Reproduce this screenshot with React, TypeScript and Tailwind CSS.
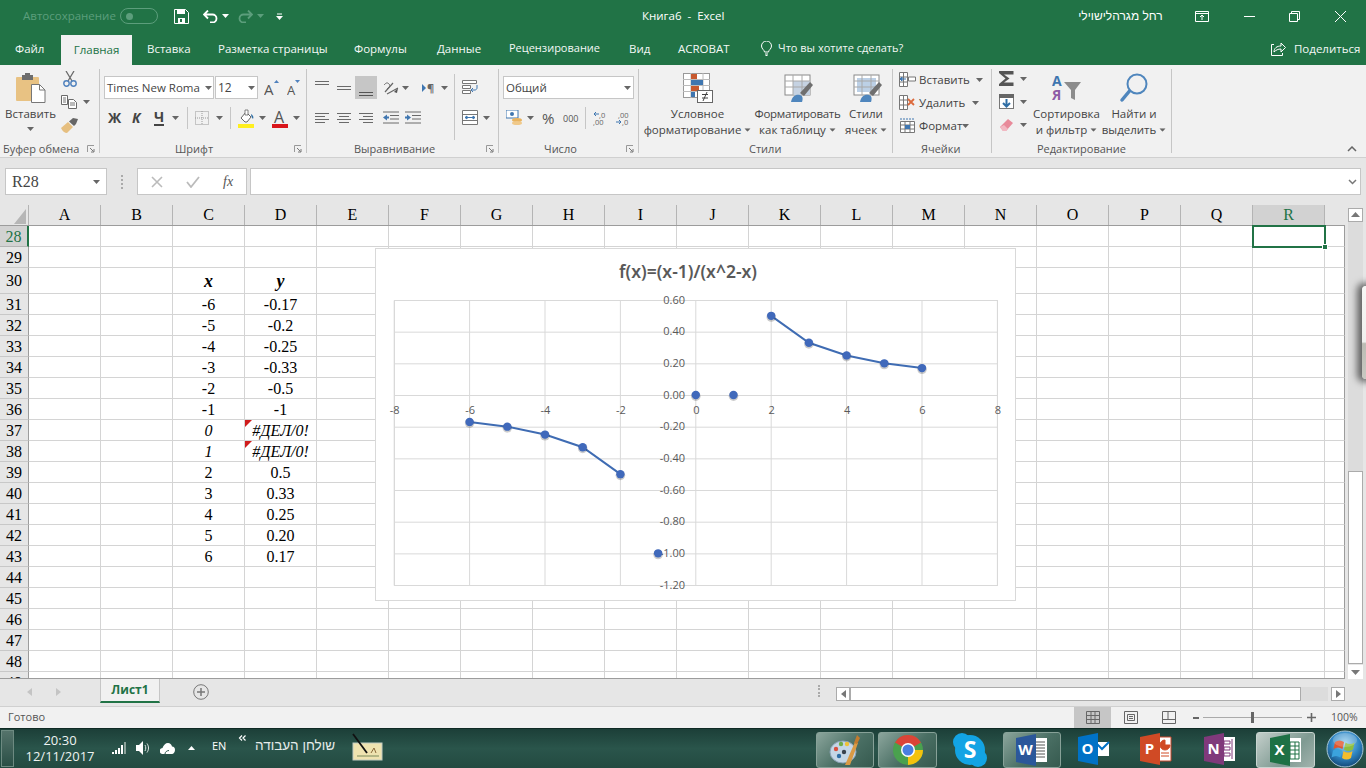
import React from "react";

const COLS = ["A", "B", "C", "D", "E", "F", "G", "H", "I", "J", "K", "L", "M", "N", "O", "P", "Q", "R"];

const ROWS = [
  { n: 28, h: "h-[21px]" },
  { n: 29, h: "h-[21px]" },
  { n: 30, h: "h-[26px]", x: "x", y: "y", style: "font-bold italic text-[18px]" },
  { n: 31, h: "h-[21px]", x: "-6", y: "-0.17" },
  { n: 32, h: "h-[21px]", x: "-5", y: "-0.2" },
  { n: 33, h: "h-[21px]", x: "-4", y: "-0.25" },
  { n: 34, h: "h-[21px]", x: "-3", y: "-0.33" },
  { n: 35, h: "h-[21px]", x: "-2", y: "-0.5" },
  { n: 36, h: "h-[21px]", x: "-1", y: "-1" },
  { n: 37, h: "h-[21px]", x: "0", y: "#ДЕЛ/0!", style: "italic", err: true },
  { n: 38, h: "h-[21px]", x: "1", y: "#ДЕЛ/0!", style: "italic", err: true },
  { n: 39, h: "h-[21px]", x: "2", y: "0.5" },
  { n: 40, h: "h-[21px]", x: "3", y: "0.33" },
  { n: 41, h: "h-[21px]", x: "4", y: "0.25" },
  { n: 42, h: "h-[21px]", x: "5", y: "0.20" },
  { n: 43, h: "h-[21px]", x: "6", y: "0.17" },
  { n: 44, h: "h-[21px]" },
  { n: 45, h: "h-[21px]" },
  { n: 46, h: "h-[21px]" },
  { n: 47, h: "h-[21px]" },
  { n: 48, h: "h-[21px]" },
  { n: 49, h: "h-[21px]" },
] as { n: number; h: string; x?: string; y?: string; style?: string; err?: boolean }[];

const Caret = ({ className = "", color = "#666" }: { className?: string; color?: string }) => (
  <svg className={"shrink-0 " + className} width="7" height="4" viewBox="0 0 7 4">
    <path d="M0 0h7L3.5 4z" fill={color} />
  </svg>
);

// stacked lines used by the alignment buttons
const Lines = ({ rows, className = "", color = "#6a6a6a" }: { rows: number[][]; className?: string; color?: string }) => (
  <svg className={"shrink-0 " + className} width="15" height="14" viewBox="0 0 15 14">
    {rows.map(([x, w, y], i) => (
      <rect key={i} x={x} y={y} width={w} height="1" fill={color} />
    ))}
  </svg>
);

const GROUP_LABEL = "text-[11px] text-[#555] whitespace-nowrap";

const Launcher = () => (
  <svg width="8" height="8" viewBox="0 0 8 8" className="shrink-0">
    <path d="M0.5 7V0.5H7" fill="none" stroke="#999" />
    <path d="M3 3l3.5 3.5M7 4v3H4" fill="none" stroke="#777" />
  </svg>
);

function Group({ w, label, labelClass, launcher, children }: {
  w: string; label: string; labelClass: string; launcher?: boolean; children: React.ReactNode;
}) {
  return (
    <div className={"flex shrink-0 " + w}>
      <div className="flex-1 flex flex-col min-w-0">
        <div className="h-[76px] flex">{children}</div>
        <div className="h-[16px] flex items-center">
          <span className={GROUP_LABEL + " " + labelClass}>{label}</span>
          {launcher && <span className="flex ml-auto mr-[4px]"><Launcher /></span>}
        </div>
      </div>
      <div className="w-px h-[84px] mt-[4px] bg-[#c6c6c6] shrink-0" />
    </div>
  );
}

const BigLabel = ({ a, b, tight }: { a: string; b: string; tight?: boolean }) => (
  <div className="flex flex-col items-center text-[11.5px] leading-[16px] text-[#444] whitespace-nowrap">
    <span className={tight ? "tracking-[-0.3px]" : ""}>{a}</span>
    <span className="flex items-center">
      {b}
      <Caret className="ml-[3px] scale-90" />
    </span>
  </div>
);

const TableBrush = ({ fill }: { fill: React.ReactNode }) => (
  <svg width="30" height="30" viewBox="0 0 30 30">
    <rect x="1" y="2" width="25" height="20" fill="#fff" stroke="#8a8a8a" />
    {fill}
    <path d="M1 8h25M1 14h25M9 2v20M18 2v20" stroke="#a8a8a8" fill="none" />
    <path d="M16 20L26 9l3 3-9 11z" fill="#6f6f6f" />
    <path d="M7 29c1-6 5-8 9-7 3 1 3 4 2 7z" fill="#4f86bd" />
  </svg>
);

function Ribbon() {
  return (
    <div className="h-[92px] bg-[#f1f1f1] flex shrink-0">
      <Group w="w-[100px]" label="Буфер обмена" labelClass="ml-[3px]" launcher>
        <div className="w-[61px] flex flex-col items-center pt-[8px]">
          <svg width="30" height="30" viewBox="0 0 30 30">
            <rect x="0" y="4" width="23" height="24" rx="1" fill="#e8c283" />
            <rect x="6" y="2" width="11" height="5" fill="#6d6d6d" />
            <rect x="9" y="0" width="5" height="3" fill="#6d6d6d" />
            <path d="M15.5 11.5h8l5.5 5.5v12.5h-13.5z" fill="#fff" stroke="#777" />
            <path d="M23.5 11.5v5.500h5.500" fill="none" stroke="#777" />
          </svg>
          <span className="text-[11.5px] leading-[16px] text-[#444] mt-[3px]">Вставить</span>
          <Caret className="mt-[5px]" />
        </div>
        <div className="flex flex-col pt-[6px]">
          <svg width="16" height="16" viewBox="0 0 16 16" className="ml-[1px]">
            <path d="M4 0l6 10M12 0L6 10" stroke="#6b6b6b" strokeWidth="1.300" fill="none" />
            <circle cx="4.500" cy="12.500" r="2.700" fill="none" stroke="#4f81bd" strokeWidth="1.400" />
            <circle cx="11.500" cy="12.500" r="2.700" fill="none" stroke="#4f81bd" strokeWidth="1.400" />
          </svg>
          <div className="flex items-center mt-[8px]">
            <svg width="16" height="14" viewBox="0 0 16 14">
              <path d="M.5.500h6v9h-6zM7.500 4.500h5l3 3v6h-8z" fill="#fff" stroke="#6a6a6a" />
              <path d="M2 3h3M2 5h3M2 7h3M9 8h5M9 10h5" stroke="#777" />
            </svg>
            <Caret className="ml-[6px]" />
          </div>
          <svg width="18" height="15" viewBox="0 0 18 15" className="mt-[9px]">
            <path d="M0 10L7 4l5 5-6 6c-2 0-5-2-6-5z" fill="#e6bf80" />
            <path d="M8 3.500L12 0l5 1-2 5-2 2z" fill="#666" />
          </svg>
        </div>
      </Group>

      <Group w="w-[207px]" label="Шрифт" labelClass="ml-[75px]" launcher>
        <div className="pt-[11px] flex flex-col">
          <div className="flex items-center">
            <div className="ml-[4px] w-[110px] h-[23px] bg-white border border-[#c6c6c6] flex items-center pl-[2px] text-[11.5px] text-[#444] whitespace-nowrap">
              <span className="w-[98px]">Times New Roma</span>
              <Caret />
            </div>
            <div className="ml-[1px] w-[43px] h-[23px] bg-white border border-[#c6c6c6] flex items-center pl-[2px] text-[12px] text-[#444]">
              <span className="w-[30px]">12</span>
              <Caret />
            </div>
            <svg width="16" height="16" viewBox="0 0 16 16" className="ml-[6px] shrink-0">
              <text x="0" y="15" fontSize="15" fill="#555" fontFamily="Open Sans">A</text>
              <path d="M10 3l2.500-3L15 3z" fill="#4f81bd" />
            </svg>
            <svg width="14" height="16" viewBox="0 0 14 16" className="ml-[7px] shrink-0">
              <text x="0" y="15" fontSize="13" fill="#555" fontFamily="Open Sans">A</text>
              <path d="M8 0h5l-2.500 3z" fill="#4f81bd" />
            </svg>
          </div>
          <div className="flex items-center mt-[8px] h-[22px] text-[#444]">
            <span className="ml-[8px] w-[14px] text-[14px] font-bold leading-none">Ж</span>
            <span className="ml-[10px] w-[9px] text-[14px] font-bold italic leading-none">К</span>
            <span className="ml-[13px] w-[10px] text-[14px] font-bold leading-none border-b-2 border-[#444]">Ч</span>
            <Caret className="ml-[8px]" />
            <div className="ml-[8px] w-px h-[22px] bg-[#c6c6c6]" />
            <svg width="14" height="14" viewBox="0 0 14 14" className="ml-[7px] shrink-0">
              <rect x=".5" y=".5" width="13" height="13" fill="none" stroke="#999" strokeDasharray="1 1" />
              <path d="M7 0v14M0 7h14" stroke="#999" strokeDasharray="1 1" />
            </svg>
            <Caret className="ml-[7px]" />
            <div className="ml-[7px] w-px h-[22px] bg-[#c6c6c6]" />
            <svg width="16" height="19" viewBox="0 0 16 19" className="ml-[7px] shrink-0">
              <path d="M3 9l5-6 5 5-4 5H7z" fill="#fff" stroke="#666" />
              <path d="M7 1h3v5H7z" fill="#fff" stroke="#666" strokeWidth=".8" />
              <path d="M13 5c2 1 3 3 2 5-1-1-2-3-2-5z" fill="#2f6ea5" />
              <rect x="0" y="15" width="16" height="4" fill="#ffef1f" />
            </svg>
            <Caret className="ml-[5px]" />
            <svg width="16" height="19" viewBox="0 0 16 19" className="ml-[6px] shrink-0">
              <text x="2" y="14" fontSize="16" fill="#555" fontFamily="Open Sans">A</text>
              <rect x="0" y="15" width="16" height="4" fill="#d9161c" />
            </svg>
            <Caret className="ml-[5px]" />
          </div>
        </div>
      </Group>

      <Group w="w-[192px]" label="Выравнивание" labelClass="ml-[47px]" launcher>
        <div className="w-[147px] pt-[11px] flex flex-col">
          <div className="flex items-center h-[23px]">
            <Lines className="ml-[8px] -mt-[6px]" rows={[[0, 14, 3], [0, 14, 6]]} />
            <Lines className="ml-[7px]" rows={[[0, 14, 5], [0, 14, 8]]} />
            <div className="ml-[3px] w-[22px] h-[23px] bg-[#c6c6c6] flex items-center justify-center pt-[8px]">
              <Lines rows={[[0, 14, 7], [0, 14, 10]]} color="#555" />
            </div>
            <svg width="16" height="15" viewBox="0 0 16 15" className="ml-[6px] shrink-0">
              <path d="M2 12L10 3M4 14l11-6" stroke="#666" fill="none" strokeWidth="1.200" />
              <path d="M1 5c2-2 3-3 5-1s0 3-2 5" stroke="#666" fill="none" />
              <path d="M11 12l4-4-1 5z" fill="#555" />
            </svg>
            <Caret className="ml-[3px]" />
            <svg width="13" height="12" viewBox="0 0 13 12" className="ml-[13px] shrink-0">
              <path d="M0 2l4 4-4 4z" fill="#3f76b0" />
              <text x="5" y="10" fontSize="11" fontWeight="700" fill="#666" fontFamily="Open Sans">¶</text>
            </svg>
            <Caret className="ml-[6px]" />
          </div>
          <div className="flex items-center mt-[8px] h-[22px]">
            <Lines className="ml-[8px]" rows={[[0, 14, 2], [0, 10, 5], [0, 14, 8], [0, 10, 11]]} />
            <Lines className="ml-[7px]" rows={[[0, 14, 2], [2, 10, 5], [0, 14, 8], [2, 10, 11]]} />
            <Lines className="ml-[7px]" rows={[[0, 14, 2], [4, 10, 5], [0, 14, 8], [4, 10, 11]]} />
            <svg width="17" height="14" viewBox="0 0 17 14" className="ml-[9px] shrink-0">
              <path d="M0 1h16M7 4.500h9M7 8h9M0 12h16" stroke="#6a6a6a" />
              <path d="M0 6.500l4-3v2h2v2H4v2z" fill="#3f76b0" />
            </svg>
            <svg width="17" height="14" viewBox="0 0 17 14" className="ml-[5px] shrink-0">
              <path d="M0 1h16M7 4.500h9M7 8h9M0 12h16" stroke="#6a6a6a" />
              <path d="M6 6.500l-4-3v2H0v2h2v2z" fill="#3f76b0" />
            </svg>
          </div>
        </div>
        <div className="w-px h-[66px] mt-[9px] bg-[#c6c6c6]" />
        <div className="ml-[7px] flex flex-col pt-[15px]">
          <svg width="17" height="14" viewBox="0 0 17 14">
            <path d="M.5.500h14v3H.5zM.5 5.500h8v3H.5zM.5 10.500h8v3H.5z" fill="#fff" stroke="#777" />
            <path d="M15 5v3c0 1-1 2-2 2H9m2-2l-2 2 2 2" fill="none" stroke="#3f76b0" />
          </svg>
          <div className="flex items-center mt-[16px]">
            <svg width="16" height="15" viewBox="0 0 16 15">
              <path d="M.5.500h15v14H.5zM.5 4.500h15M.5 10.500h15" fill="#fff" stroke="#777" />
              <path d="M3 7.500h10M3 7.500l2-1.500v3zM13 7.500L11 6v3z" stroke="#3f76b0" fill="#3f76b0" />
            </svg>
            <Caret className="ml-[5px]" />
          </div>
        </div>
      </Group>

      <Group w="w-[140px]" label="Число" labelClass="ml-[45px]" launcher>
        <div className="pt-[11px] flex flex-col">
          <div className="ml-[4px] w-[131px] h-[23px] bg-white border border-[#c6c6c6] flex items-center pl-[2px] text-[11.5px] text-[#444]">
            <span className="w-[118px]">Общий</span>
            <Caret />
          </div>
          <div className="flex items-center mt-[8px] h-[22px]">
            <svg width="17" height="16" viewBox="0 0 17 16" className="ml-[7px] shrink-0">
              <rect x="0" y="0" width="12" height="8" fill="#fff" stroke="#3f76b0" />
              <circle cx="6" cy="4" r="2" fill="#3f76b0" />
              <ellipse cx="11" cy="10" rx="5" ry="2" fill="#e8b35f" />
              <ellipse cx="11" cy="13" rx="5" ry="2" fill="#f0c98a" />
            </svg>
            <Caret className="ml-[4px]" />
            <span className="ml-[8px] w-[14px] text-[15px] leading-none text-[#555]">%</span>
            <span className="ml-[7px] w-[15px] text-[9px] leading-none text-[#555]">000</span>
            <div className="ml-[7px] w-px h-[22px] bg-[#c6c6c6]" />
            <svg width="15" height="15" viewBox="0 0 15 15" className="ml-[7px] shrink-0">
              <text x="6" y="7" fontSize="7.500" fill="#666" fontFamily="Open Sans">,0</text>
              <text x="0" y="14" fontSize="7.500" fill="#666" fontFamily="Open Sans">,00</text>
              <path d="M6 3H1m2-2L1 3l2 2" fill="none" stroke="#3f76b0" />
            </svg>
            <svg width="15" height="15" viewBox="0 0 15 15" className="ml-[7px] shrink-0">
              <text x="3" y="7" fontSize="7.500" fill="#666" fontFamily="Open Sans">,00</text>
              <text x="7" y="14" fontSize="7.500" fill="#666" fontFamily="Open Sans">,0</text>
              <path d="M1 11h5M4 9l2 2-2 2" fill="none" stroke="#3f76b0" />
            </svg>
          </div>
        </div>
      </Group>

      <Group w="w-[254px]" label="Стили" labelClass="ml-[110px]">
        <div className="ml-[6px] w-[105px] flex flex-col items-center pt-[8px]">
          <svg width="30" height="30" viewBox="0 0 30 30" className="mb-[3px]">
            <rect x=".5" y=".5" width="26" height="24" fill="#fff" stroke="#999" />
            <path d="M0 6.500h27M0 12.500h27M0 18.500h27M8 0v25M20 0v25" stroke="#bbb" />
            <rect x="8" y="1" width="6" height="5" fill="#c8592f" />
            <rect x="8" y="7" width="12" height="5" fill="#3f76b0" />
            <rect x="8" y="13" width="8" height="5" fill="#c8592f" />
            <rect x="8" y="19" width="4" height="5" fill="#3f76b0" />
            <rect x="14.500" y="17.500" width="15" height="12" fill="#fff" stroke="#666" />
            <path d="M19 21.500h6M19 25h6M20 28l4-9" stroke="#444" />
          </svg>
          <BigLabel a="Условное" b="форматирование" />
        </div>
        <div className="ml-[3px] w-[89px] flex flex-col items-center pt-[8px]">
          <div className="mb-[3px] h-[30px] ml-[2px]">
            <TableBrush fill={<rect x="9" y="8" width="17" height="14" fill="#c5d2e2" />} />
          </div>
          <BigLabel a="Форматировать" b="как таблицу" tight />
        </div>
        <div className="ml-[4px] w-[40px] flex flex-col items-center pt-[8px]">
          <div className="mb-[3px] h-[30px] ml-[3px]">
            <TableBrush fill={<rect x="4" y="5" width="19" height="14" fill="#bcd0e6" />} />
          </div>
          <BigLabel a="Стили" b="ячеек" />
        </div>
      </Group>

      <Group w="w-[99px]" label="Ячейки" labelClass="ml-[28px]">
        <div className="pt-[3px] flex flex-col text-[11.5px] text-[#444]">
          <div className="h-[23px] flex items-center ml-[6px]">
            <svg width="17" height="15" viewBox="0 0 17 15" className="shrink-0">
              <path d="M.5.500h8v14h-8zM.5 5h8M.5 10h8M4.500 0v15" fill="#fff" stroke="#777" />
              <path d="M9.500 5h7v4h-7z" fill="#fff" stroke="#777" />
              <path d="M1 7h6M1 7l2-2v4z" stroke="#3f76b0" fill="#3f76b0" />
            </svg>
            <span className="ml-[3px] w-[57px] whitespace-nowrap">Вставить</span>
            <Caret />
          </div>
          <div className="h-[23px] flex items-center ml-[6px]">
            <svg width="17" height="15" viewBox="0 0 17 15" className="shrink-0">
              <path d="M.5.500h8v14h-8zM.5 5h8M.5 10h8M4.500 0v15" fill="#fff" stroke="#777" />
              <path d="M9 4l6 6M15 4l-6 6" stroke="#dc6a3c" strokeWidth="1.800" />
            </svg>
            <span className="ml-[3px] w-[53px] whitespace-nowrap">Удалить</span>
            <Caret />
          </div>
          <div className="h-[23px] flex items-center ml-[6px]">
            <svg width="17" height="15" viewBox="0 0 17 15" className="shrink-0">
              <path d="M1.500 3.500h14v11h-14zM1.500 7h14M1.500 11h14M6 3v12M11 3v12" fill="#fff" stroke="#777" />
              <path d="M1 1h14" stroke="#3f76b0" strokeDasharray="2 1" />
              <rect x="6" y="7" width="5" height="4" fill="#3f76b0" />
            </svg>
            <span className="ml-[3px] w-[43px] whitespace-nowrap">Формат</span>
            <Caret />
          </div>
        </div>
      </Group>

      <Group w="w-[180px]" label="Редактирование" labelClass="ml-[45px]">
        <div className="w-[38px] pl-[7px] pt-[6px] flex flex-col">
          <div className="flex items-center h-[15px]">
            <svg width="15" height="15" viewBox="0 0 15 15" className="shrink-0">
              <path d="M0 0h14.500v3.500H5l5.500 4-5.500 4h9.500V15H0v-2l6.500-5.500L0 2z" fill="#555" />
            </svg>
            <Caret className="ml-[6px]" />
          </div>
          <div className="flex items-center h-[15px] mt-[8px]">
            <svg width="15" height="15" viewBox="0 0 15 15">
              <rect x=".5" y=".5" width="14" height="14" fill="#fff" stroke="#777" />
              <rect x="0" y="0" width="15" height="4" fill="#666" />
              <path d="M7.500 5v7M4 9l3.500 3.500L11 9" stroke="#2f6ea5" strokeWidth="2" fill="none" />
            </svg>
            <Caret className="ml-[6px]" />
          </div>
          <div className="flex items-center h-[14px] mt-[9px]">
            <svg width="15" height="14" viewBox="0 0 15 14">
              <path d="M1 9l8-8 5 4-7 8H4z" fill="#e88a9a" />
              <path d="M1 9l3 4h3l2-2-4-4z" fill="#f2b8c2" />
            </svg>
            <Caret className="ml-[6px]" />
          </div>
        </div>
        <div className="ml-[3px] w-[67px] flex flex-col items-center pt-[8px]">
          <svg width="30" height="30" viewBox="0 0 30 30" className="mb-[3px] ml-[1px]">
            <text x="0" y="13" fontSize="14" fontWeight="700" fill="#3f76b0" fontFamily="Open Sans">A</text>
            <text x="0" y="27" fontSize="14" fontWeight="700" fill="#8e5ba6" fontFamily="Open Sans">Я</text>
            <path d="M12 9h17l-6 8v10l-4-2v-8z" fill="#8c8c8c" />
          </svg>
          <BigLabel a="Сортировка" b="и фильтр" />
        </div>
        <div className="ml-[3px] w-[62px] flex flex-col items-center pt-[8px]">
          <svg width="30" height="30" viewBox="0 0 30 30" className="mb-[3px]">
            <circle cx="18" cy="11" r="9.500" fill="none" stroke="#4f86bd" strokeWidth="2" />
            <path d="M10.500 18L3 27" stroke="#4f86bd" strokeWidth="3.500" strokeLinecap="round" />
          </svg>
          <BigLabel a="Найти и" b="выделить" />
        </div>
      </Group>

      <div className="flex-1 flex justify-end items-end pb-[5px] pr-[9px]">
        <svg width="10" height="6" viewBox="0 0 10 6"><path d="M1 5l4-4 4 4" fill="none" stroke="#666" strokeWidth="1.500" /></svg>
      </div>
    </div>
  );
}

function Chart() {
  const px = (x: number) => 695.8 + x * 37.7;
  const py = (y: number) => 395 - y * 158.33;
  const left = [[-6, -0.17], [-5, -0.2], [-4, -0.25], [-3, -0.33], [-2, -0.5]];
  const right = [[2, 0.5], [3, 0.33], [4, 0.25], [5, 0.2], [6, 0.17]];
  const single = [[-1, -1], [0, 0], [1, 0]];
  const ys = ["0.60", "0.40", "0.20", "0.00", "-0.20", "-0.40", "-0.60", "-0.80", "-1.00", "-1.20"];
  const poly = (p: number[][]) => p.map(([x, y]) => px(x) + "," + py(y)).join(" ");
  return (
    <div className="absolute left-[375px] top-[43px] w-[641px] h-[353px] bg-white border border-[#d9d9d9] flex flex-col">
      <div className="h-[46px] shrink-0 flex items-center justify-center pr-[15px] pb-[2px] text-[17.5px] font-semibold text-[#595959] font-['Noto_Sans',sans-serif]">
        f(x)=(x-1)/(x^2-x)
      </div>
      <svg width="639" height="305" viewBox="376 295 639 305" className="block">
        <rect x="394.500" y="300.500" width="603" height="285" fill="none" stroke="#d9d9d9" />
        {ys.map((l, i) => (
          <line key={l} x1="394.500" x2="997.500" y1={300.5 + i * 31.67} y2={300.5 + i * 31.67} stroke="#d9d9d9" />
        ))}
        {[-8, -6, -4, -2, 0, 2, 4, 6, 8].map((x) => (
          <line key={x} x1={px(x)} x2={px(x)} y1="300.500" y2="585.500" stroke="#d9d9d9" />
        ))}
        {ys.map((l, i) => (
          <text key={l} x="685" y={303.5 + i * 31.67} textAnchor="end" fontSize="11" fill="#595959" fontFamily="Open Sans">{l}</text>
        ))}
        {[-8, -6, -4, -2, 0, 2, 4, 6, 8].map((x) => (
          <text key={x} x={px(x) + (x < 0 ? 0.5 : 0.5)} y="414" textAnchor="middle" fontSize="11" fill="#595959" fontFamily="Open Sans">{x}</text>
        ))}
        <polyline points={poly(left)} fill="none" stroke="#3f6cb3" strokeWidth="2" />
        <polyline points={poly(right)} fill="none" stroke="#3f6cb3" strokeWidth="2" />
        {[...left, ...right, ...single].map(([x, y]) => (
          <g key={x}>
            <circle cx={px(x)} cy={py(y) + 1.200} r="4.800" fill="#000" fillOpacity=".2" />
            <circle cx={px(x)} cy={py(y)} r="4.200" fill="#4069bb" />
          </g>
        ))}
      </svg>
    </div>
  );
}

function Sheet() {
  return (
    <div className="w-[1345px] h-[474px] relative overflow-hidden bg-white border-b border-[#9c9c9c] shrink-0 font-['Liberation_Serif',serif] text-[16px] text-black">
      <div className="flex h-[21px] bg-[#e6e6e6] border-b border-[#9c9c9c]">
        <div className="w-[29px] h-[20px] border-r border-[#b4b4b4] flex items-end justify-end pr-[2px] pb-[1px]">
          <svg width="12" height="15" viewBox="0 0 12 15"><path d="M12 0v15H0z" fill="#b6b6b6" /></svg>
        </div>
        {COLS.map((c) => (
          <div key={c} className={"w-[72px] h-[20px] flex items-center justify-center border-r border-[#b4b4b4] " + (c === "R" ? "bg-[#d2d2d2] text-[#217346]" : "")}>
            {c}
          </div>
        ))}
      </div>
      {ROWS.map((r) => (
        <div key={r.n} className={"flex " + r.h}>
          <div className={"w-[29px] flex items-center justify-center pt-[1px] border-r border-b text-[16px] " + (r.n === 28 ? "bg-[#d2d2d2] text-[#217346] border-r-2 border-r-[#217346] border-b-[#b4b4b4]" : "bg-[#e6e6e6] border-r-[#9c9c9c] border-b-[#c8c8c8]")}>
            {r.n}
          </div>
          {COLS.map((c) => (
            <div key={c} className={"w-[72px] relative flex items-center justify-center pt-[1px] border-r border-b border-[#d4d4d4] whitespace-nowrap " + (r.style || "")}>
              {c === "C" && r.x}
              {c === "D" && r.y}
              {c === "D" && r.err && (
                <span className="absolute left-0 top-0 w-0 h-0 border-t-[7px] border-t-[#d01c1c] border-r-[7px] border-r-transparent" />
              )}
            </div>
          ))}
          <div className="flex-1 border-r border-r-[#9c9c9c] border-b border-b-[#d4d4d4]" />
        </div>
      ))}
      <Chart />
      <div className="absolute left-[1252px] top-[20px] w-[74px] h-[23px] border-2 border-[#217346]">
        <span className="absolute right-[-4px] bottom-[-4px] w-[6px] h-[6px] bg-[#217346] border border-white" />
      </div>
    </div>
  );
}

const VScroll = () => (
  <div className="w-[21px] bg-[#e6e6e6] flex flex-col pl-[3px] pt-[3px] shrink-0 h-[474px]">
    <div className="w-[15px] h-[14px] bg-white border border-[#ababab] flex items-center justify-center">
      <svg width="9" height="5" viewBox="0 0 9 5"><path d="M0 5l4.500-5L9 5z" fill="#777" /></svg>
    </div>
    <div className="w-[15px] h-[250px] bg-[#dcdcdc]" />
    <div className="w-[15px] h-[193px] bg-white border border-[#ababab]" />
    <div className="w-[15px] h-[14px] mt-[1px] bg-white flex items-center justify-center">
      <svg width="9" height="5" viewBox="0 0 9 5"><path d="M0 0h9L4.500 5z" fill="#777" /></svg>
    </div>
  </div>
);

const Office = ({ color, letter, kind }: { color: string; letter: string; kind: string }) => (
  <svg width="32" height="32" viewBox="0 0 32 32">
    {kind === "o" ? (
      <g>
        <rect x="18" y="9" width="13" height="14" fill="#fff" />
        <path d="M19 11l5 5 7-7" fill="none" stroke="#0072c6" strokeWidth="2" />
      </g>
    ) : (
      <path d="M18 4h13v24H18z" fill="#fff" stroke={kind === "p" ? "#c8472a" : "none"} />
    )}
    {kind === "x" && <path d="M20 8h9v17h-9zM20 12h9M20 16h9M20 20h9M25 8v17" fill="none" stroke={color} />}
    {kind === "w" && <path d="M20 8h9M20 11h9M20 14h9M20 17h9M20 20h9M20 23h9" stroke="#555" />}
    {kind === "p" && <path d="M21 20h8M21 23h8M25 7a5 5 0 1 0 5 5h-5z" stroke={color} fill={color} />}
    {kind === "n" && <path d="M20 8h6v3h-6zM20 14h6v3h-6zM20 20h6v3h-6zM28 6v20" stroke={color} fill="none" />}
    <path d="M0 4L20 0v32L0 28z" fill={color} />
    <text x="9.500" y="21" textAnchor="middle" fontSize="15" fontWeight="700" fill="#fff" fontFamily="Open Sans">{letter}</text>
  </svg>
);

const Glass = ({ w, light, children, className = "" }: { w: string; light?: boolean; children: React.ReactNode; className?: string }) => (
  <div className={"h-[36px] mt-[3px] rounded-[3px] border flex items-center justify-center shrink-0 " + w + " " + className + " " + (light
    ? "border-[#c8d4d0] bg-[linear-gradient(135deg,#c4cfcb,#7f9a92_60%,#a1b3ad)]"
    : "border-[#87a198] bg-[linear-gradient(135deg,#8ba59c,#4a6f64_55%,#365a4f)]")}>
    {children}
  </div>
);

function Taskbar() {
  return (
    <div className="h-[40px] bg-[linear-gradient(180deg,#1c3f38,#2a554b_50%,#234a41)] border-t border-[#0f2a24] flex text-white shrink-0">
      <div className="ml-[1px] mt-[1px] w-[13px] h-[37px] border border-[#6d8a81] bg-[linear-gradient(180deg,#55736b,#2a4f46)] shrink-0" />
      <div className="w-[92px] flex flex-col items-center text-[13px] leading-[16px] pt-[3px] shrink-0 text-[#eef3f1]">
        <span>20:30</span>
        <span>12/11/2017</span>
      </div>
      <div className="flex items-center h-[38px] shrink-0">
        <svg width="15" height="12" viewBox="0 0 15 12" className="ml-[6px]">
          <path d="M0 10h2v2H0zM3 8h2v4H3zM6 6h2v6H6zM9 3h2v9H9z" fill="#fff" />
          <path d="M12 0h2v12h-2z" fill="#8aa199" />
        </svg>
        <svg width="14" height="14" viewBox="0 0 14 14" className="ml-[9px]">
          <path d="M0 4h3l4-4v14l-4-4H0z" fill="#fff" />
          <path d="M9 4c1 2 1 4 0 6M11 2.500c2 3 2 6 0 9" stroke="#dfe8e5" fill="none" />
        </svg>
        <svg width="15" height="11" viewBox="0 0 15 11" className="ml-[10px]">
          <path d="M3 11a3 3 0 0 1-.5-6C3.500 2 5.500 0 8 0c2 0 3.500 1.500 4 3.500 2 0 3 1.500 3 3.500s-1.500 4-3 4z" fill="#fff" />
          <path d="M5 11c0-2 2-3.500 4-3.500" stroke="#2a554b" fill="none" />
        </svg>
        <svg width="7" height="4" viewBox="0 0 7 4" className="ml-[13px]"><path d="M0 4l3.500-4L7 4z" fill="#fff" /></svg>
        <span className="ml-[17px] w-[14px] text-[11px] -mt-[3px]">EN</span>
        <svg width="8" height="6" viewBox="0 0 8 6" className="ml-[12px] -mt-[21px] shrink-0">
          <path d="M4 .5L1.500 3 4 5.500M7.500.5L5 3l2.500 2.500" fill="none" stroke="#fff" strokeWidth="1.200" />
        </svg>
        <span className="ml-[9px] w-[82px] text-[13.500px] text-[#e6ecea] -mt-[3px] whitespace-nowrap font-['Liberation_Sans',sans-serif]">שולחן העבודה</span>
        <svg width="32" height="32" viewBox="0 0 32 32" className="ml-[14px] mt-[2px]">
          <rect x="2" y="10" width="29" height="17" fill="#efe3b0" stroke="#c2cbc2" />
          <path d="M6 23h22" stroke="#7a8a5a" />
          <path d="M2 1l14 19" stroke="#111" strokeWidth="1.800" />
          <path d="M20 20l3-5 2 5" stroke="#8a6a3a" fill="none" />
        </svg>
      </div>
      <div className="flex ml-[433px]">
        <Glass w="w-[58px]">
          <svg width="32" height="32" viewBox="0 0 32 32">
            <ellipse cx="14" cy="18" rx="13" ry="11" fill="#c5d6e6" stroke="#8aa2b6" />
            <circle cx="7" cy="15" r="2.200" fill="#d8503f" />
            <circle cx="12" cy="10" r="2.200" fill="#70ad47" />
            <circle cx="18" cy="10" r="2.200" fill="#efc237" />
            <circle cx="10" cy="22" r="2.200" fill="#2f6ea5" />
            <circle cx="15" cy="18" r="2.200" fill="#39424e" />
            <path d="M16 31L26 8l3 1-8 22z" fill="#d99a45" />
            <path d="M25 9l3-8 3 3-3 6z" fill="#c27b2e" />
          </svg>
        </Glass>
        <Glass w="w-[59px]" className="ml-[4px]">
          <svg width="30" height="30" viewBox="0 0 30 30">
            <circle cx="15" cy="15" r="15" fill="#4aa14e" />
            <path d="M15 15L2 7.500A15 15 0 0 1 28 7.500z" fill="#db4437" />
            <path d="M15 15H30A15 15 0 0 1 15 30z" fill="#f4c20d" />
            <circle cx="15" cy="15" r="7" fill="#fff" />
            <circle cx="15" cy="15" r="5.500" fill="#4a7fe0" />
          </svg>
        </Glass>
        <div className="ml-[16px] mt-[4px] w-[34px] h-[34px] shrink-0">
          <svg width="34" height="34" viewBox="0 0 34 34">
            <circle cx="9" cy="9" r="9" fill="#13a4e4" />
            <circle cx="25" cy="25" r="9" fill="#13a4e4" />
            <circle cx="17" cy="17" r="15" fill="#13a4e4" />
            <text x="17" y="25" textAnchor="middle" fontSize="23" fontWeight="700" fill="#fff" fontFamily="Open Sans">S</text>
          </svg>
        </div>
        <Glass w="w-[58px]" className="ml-[16px]"><Office color="#2b579a" letter="W" kind="w" /></Glass>
        <div className="ml-[17px] mt-[4px] shrink-0"><Office color="#0072c6" letter="O" kind="o" /></div>
        <div className="ml-[30px] mt-[4px] shrink-0"><Office color="#d04a25" letter="P" kind="p" /></div>
        <div className="ml-[32px] mt-[4px] shrink-0"><Office color="#80397b" letter="N" kind="n" /></div>
        <Glass w="w-[59px]" light className="ml-[20px]"><Office color="#1e7145" letter="X" kind="x" /></Glass>
        <div className="ml-[11px] mt-[1px] shrink-0">
          <svg width="38" height="38" viewBox="0 0 38 38">
            <defs>
              <radialGradient id="orb" cx="50%" cy="35%" r="70%">
                <stop offset="0%" stopColor="#9fd4f2" />
                <stop offset="55%" stopColor="#2f86c4" />
                <stop offset="100%" stopColor="#0e3f6b" />
              </radialGradient>
            </defs>
            <circle cx="19" cy="19" r="18" fill="url(#orb)" stroke="#a6c6d6" />
            <path d="M9 12c3-2 6-2 9 0l-1.500 7c-3-2-6-2-9 0z" fill="#e2552d" />
            <path d="M19.500 12.500c3 2 6 2 9 0l-1.500 7c-3 2-6 2-9 0z" fill="#8cbf3f" />
            <path d="M7 20.500c3-2 6-2 9 0l-1.500 7c-3-2-6-2-9 0z" fill="#3ba3dd" />
            <path d="M17.500 21c3 2 6 2 9 0l-1.500 7c-3 2-6 2-9 0z" fill="#f5bd2c" />
            <ellipse cx="19" cy="10" rx="12" ry="7" fill="#fff" fillOpacity=".2" />
          </svg>
        </div>
      </div>
    </div>
  );
}

export default function App() {
  return (
    <div className="relative w-[1366px] h-[768px] overflow-hidden flex flex-col bg-[#e6e6e6] font-['Open_Sans',sans-serif]">
      {/* Title bar */}
      <div className="h-[32px] bg-[#217346] flex items-center text-[11.5px] text-white shrink-0">
        <span className="ml-[23px] w-[90px] text-[#5c9e7c] whitespace-nowrap">Автосохранение</span>
        <div className="ml-[7px] w-[38px] h-[16px] rounded-full border border-[#5c9e7c] flex items-center pl-[5px] shrink-0">
          <span className="w-[7px] h-[7px] rounded-full bg-[#5c9e7c]" />
        </div>
        <svg width="15" height="15" viewBox="0 0 15 15" className="ml-[16px] shrink-0">
          <path d="M.5.500h11l3 3v11H.5z" fill="none" stroke="#fff" />
          <path d="M3 1h8v4H3zM4 9h7v5H4z" fill="#fff" />
          <path d="M6 10h2v3H6z" fill="#217346" />
        </svg>
        <svg width="15" height="13" viewBox="0 0 15 13" className="ml-[14px] shrink-0">
          <path d="M1 4.500h8.500a4 4 0 0 1 0 8H7M5 .5L1 4.500l4 4" fill="none" stroke="#fff" strokeWidth="1.800" />
        </svg>
        <Caret className="ml-[4px]" color="#fff" />
        <svg width="15" height="13" viewBox="0 0 15 13" className="ml-[9px] shrink-0">
          <path d="M14 4.500H5.500a4 4 0 0 0 0 8H8M10 .5l4 4-4 4" fill="none" stroke="#5c9e7c" strokeWidth="1.800" />
        </svg>
        <Caret className="ml-[4px]" color="#5c9e7c" />
        <svg width="7" height="7" viewBox="0 0 7 7" className="ml-[12px] shrink-0">
          <path d="M1 1h5" stroke="#fff" />
          <path d="M0 3h7L3.500 7z" fill="#fff" />
        </svg>
        <span className="ml-[359px] w-[100px] whitespace-pre">Книга6  -  Excel</span>
        <span className="ml-[334px] w-[89px] whitespace-nowrap font-['Liberation_Sans',sans-serif] text-[12px] text-center">רחל מגרהלישוילי</span>
        <svg width="14" height="11" viewBox="0 0 14 11" className="ml-[30px] shrink-0">
          <path d="M.5.500h13v10H.5zM.5 2.500h13M7 9V4M5 6l2-2 2 2" fill="none" stroke="#fff" />
        </svg>
        <div className="ml-[35px] w-[11px] h-px bg-white shrink-0" />
        <svg width="11" height="11" viewBox="0 0 11 11" className="ml-[34px] shrink-0">
          <path d="M.5 2.500h8v8h-8zM2.500 2.500v-2h8v8h-2" fill="none" stroke="#fff" />
        </svg>
        <svg width="11" height="11" viewBox="0 0 11 11" className="ml-[35px] shrink-0">
          <path d="M0 0l11 11M11 0L0 11" stroke="#fff" />
        </svg>
      </div>

      {/* Tabs */}
      <div className="h-[33px] bg-[#217346] flex items-end text-[11.5px] text-[#f4f8f6] shrink-0">
        <span className="ml-[15px] w-[29px] h-[33px] flex items-center">Файл</span>
        <span className="ml-[17px] w-[71px] h-[30px] bg-[#f1f1f1] text-[#217346] flex items-center justify-center">Главная</span>
        <span className="ml-[15px] w-[42px] h-[33px] flex items-center whitespace-nowrap">Вставка</span>
        <span className="ml-[29px] w-[107px] h-[33px] flex items-center whitespace-nowrap">Разметка страницы</span>
        <span className="ml-[29px] w-[54px] h-[33px] flex items-center">Формулы</span>
        <span className="ml-[29px] w-[43px] h-[33px] flex items-center">Данные</span>
        <span className="ml-[29px] w-[91px] h-[33px] flex items-center text-[11px]">Рецензирование</span>
        <span className="ml-[29px] w-[20px] h-[33px] flex items-center">Вид</span>
        <span className="ml-[29px] w-[54px] h-[33px] flex items-center">ACROBAT</span>
        <span className="ml-[29px] h-[33px] flex items-center">
          <svg width="11" height="15" viewBox="0 0 11 15">
            <path d="M3.500 11c0-2-3-3-3-6a5 5 0 0 1 10 0c0 3-3 4-3 6zM4 13h3M4.500 14.500h2" fill="none" stroke="#fff" />
          </svg>
        </span>
        <span className="ml-[6px] w-[126px] h-[33px] flex items-center whitespace-nowrap text-[11px]">Что вы хотите сделать?</span>
        <span className="ml-[367px] h-[33px] flex items-center">
          <svg width="15" height="14" viewBox="0 0 15 14">
            <path d="M3 2.500H.5v11h11V11" fill="none" stroke="#fff" />
            <path d="M3 10c0-4 3-6 7-6V1l4.500 4.500L10 10V7c-3 0-5 1-7 3z" fill="none" stroke="#fff" />
          </svg>
        </span>
        <span className="ml-[8px] w-[65px] h-[33px] flex items-center whitespace-nowrap">Поделиться</span>
      </div>

      <Ribbon />

      {/* Formula bar */}
      <div className="h-[48px] border-t border-[#d0d0d0] flex items-center shrink-0">
        <div className="ml-[5px] w-[102px] h-[27px] bg-white border border-[#c6c6c6] flex items-center pl-[6px] font-['Liberation_Serif',serif] text-[16px] text-[#444]">
          <span className="w-[81px]">R28</span>
          <Caret />
        </div>
        <div className="ml-[14px] w-[3px] h-[14px] border-l-2 border-dotted border-[#aaa]" />
        <div className="ml-[13px] w-[110px] h-[27px] bg-white border border-[#c6c6c6] flex items-center">
          <svg width="12" height="12" viewBox="0 0 12 12" className="ml-[13px]"><path d="M1 1l10 10M11 1L1 11" stroke="#bbb" strokeWidth="1.600" /></svg>
          <svg width="14" height="12" viewBox="0 0 14 12" className="ml-[23px]"><path d="M1 6l4 5 8-10" fill="none" stroke="#bbb" strokeWidth="1.800" /></svg>
          <span className="ml-[23px] font-['Liberation_Serif',serif] italic text-[14px] text-[#555]">fx</span>
        </div>
        <div className="ml-[3px] w-[1111px] h-[27px] bg-white border border-[#c6c6c6] flex items-center justify-end pr-[3px]">
          <svg width="9" height="6" viewBox="0 0 9 6"><path d="M1 1l3.500 3.500L8 1" fill="none" stroke="#777" strokeWidth="1.500" /></svg>
        </div>
      </div>

      {/* Grid */}
      <div className="flex shrink-0">
        <Sheet />
        <VScroll />
      </div>

      {/* Sheet tabs */}
      <div className="h-[27px] flex shrink-0 bg-[#e6e6e6]">
        <svg width="5" height="8" viewBox="0 0 5 8" className="ml-[27px] mt-[9px]"><path d="M5 0v8L0 4z" fill="#c4c4c4" /></svg>
        <svg width="5" height="8" viewBox="0 0 5 8" className="ml-[24px] mt-[9px]"><path d="M0 0v8l5-4z" fill="#c4c4c4" /></svg>
        <div className="ml-[39px] w-[60px] h-[24px] bg-[#f1f1f1] border-b-2 border-[#217346] border-x border-x-[#c6c6c6] flex items-center justify-center text-[12px] font-bold text-[#217346]">Лист1</div>
        <svg width="16" height="16" viewBox="0 0 16 16" className="ml-[33px] mt-[5px]">
          <circle cx="8" cy="8" r="7.300" fill="none" stroke="#777" />
          <path d="M8 4v8M4 8h8" stroke="#777" strokeWidth="1.500" />
        </svg>
        <div className="ml-[609px] mt-[6px] w-[3px] h-[12px] border-l-2 border-dotted border-[#aaa]" />
        <div className="ml-[15px] mt-[8px] w-[14px] h-[14px] bg-white border border-[#ababab] flex items-center justify-center">
          <svg width="5" height="8" viewBox="0 0 5 8"><path d="M5 0v8L0 4z" fill="#777" /></svg>
        </div>
        <div className="mt-[8px] w-[451px] h-[14px] bg-white border border-[#ababab]" />
        <div className="mt-[8px] w-[27px] h-[14px] bg-[#dcdcdc]" />
        <div className="ml-[3px] mt-[8px] w-[14px] h-[14px] bg-white border border-[#ababab] flex items-center justify-center">
          <svg width="5" height="8" viewBox="0 0 5 8"><path d="M0 0v8l5-4z" fill="#777" /></svg>
        </div>
      </div>

      {/* Status bar */}
      <div className="h-[22px] bg-[#f1f1f1] border-t border-[#d0d0d0] flex items-center text-[11px] text-[#555] shrink-0">
        <span className="ml-[8px] w-[40px] -mt-[1px]">Готово</span>
        <div className="ml-[1026px] w-[37px] h-[21px] bg-[#c6c6c6] flex items-center justify-center">
          <svg width="14" height="13" viewBox="0 0 14 13"><path d="M.5.500h13v12H.5zM.5 4.500h13M.5 8.500h13M5 0v13M9 0v13" fill="none" stroke="#666" /></svg>
        </div>
        <svg width="14" height="13" viewBox="0 0 14 13" className="ml-[13px]"><path d="M.5.500h13v12H.5zM3.500 3.500h7v6h-7zM5 5.500h4M5 7.500h4" fill="none" stroke="#666" /></svg>
        <svg width="14" height="13" viewBox="0 0 14 13" className="ml-[24px]"><path d="M.5.500h13v12H.5zM.5 8.500h13M6 0v8.500" fill="none" stroke="#666" /></svg>
        <span className="ml-[17px] w-[6px] h-[2px] bg-[#666] shrink-0" />
        <div className="ml-[4px] w-[99px] h-px bg-[#aaa] flex items-center justify-center shrink-0">
          <span className="w-[3px] h-[11px] bg-[#666]" />
        </div>
        <svg width="9" height="9" viewBox="0 0 9 9" className="ml-[5px] shrink-0"><path d="M4.500 0v9M0 4.500h9" stroke="#666" strokeWidth="1.600" /></svg>
        <span className="ml-[15px] text-[10.5px]">100%</span>
      </div>

      <Taskbar />

      {/* floating side widget at the window edge */}
      <div className="absolute left-[1362px] top-[286px] w-[10px] h-[93px] rounded-l-[4px] shadow-[-2px_0_7px_3px_rgba(0,0,0,0.55)] bg-[linear-gradient(180deg,#f7f7f5_0%,#f0f0ee_60%,#bcbcb4_62%,#c9c9c2_100%)]" />
    </div>
  );
}
